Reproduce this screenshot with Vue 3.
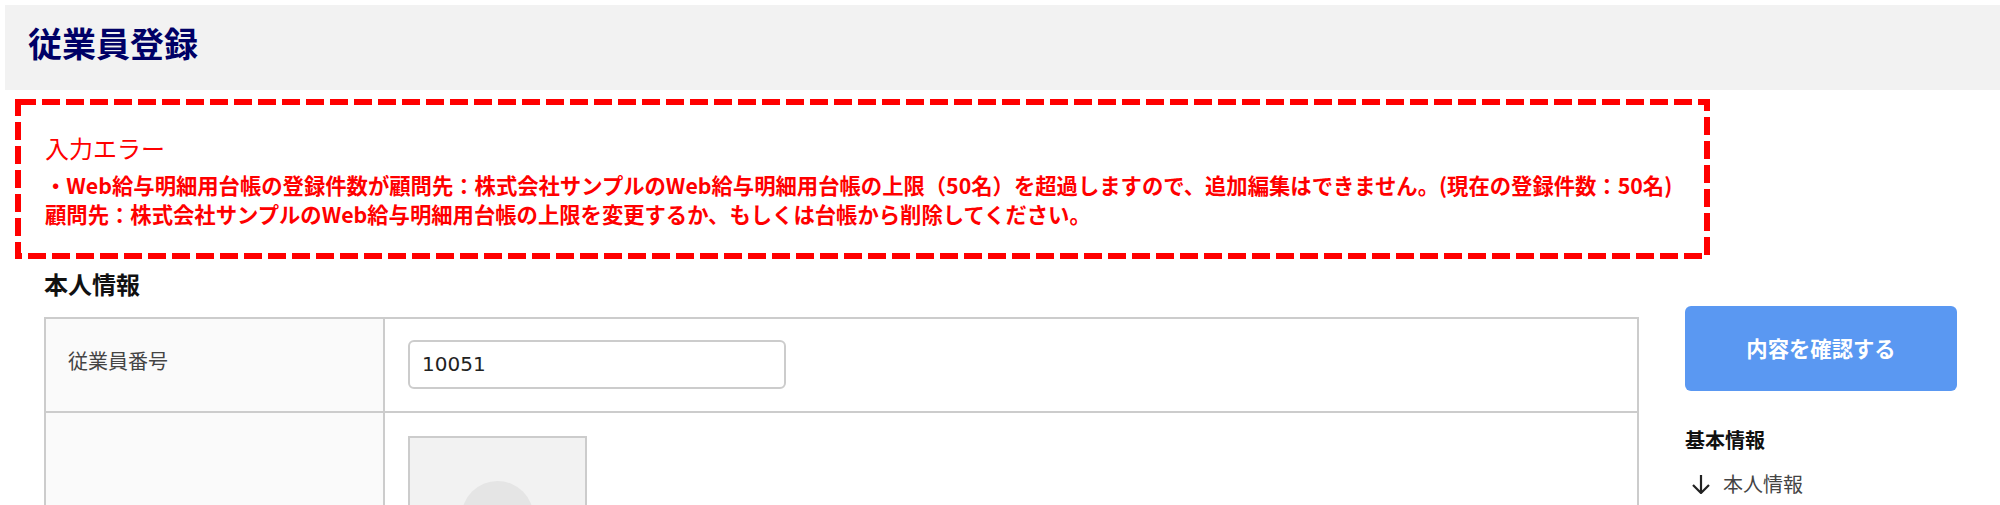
<template>
  <div class="page">
    <header class="head">
      <h1>従業員登録</h1>
    </header>

    <div class="error-box">
      <p class="error-title">入力エラー</p>
      <p class="error-text">・Web給与明細用台帳の登録件数が顧問先：株式会社サンプルのWeb給与明細用台帳の上限（50名）を超過しますので、追加編集はできません。(現在の登録件数：50名)</p>
      <p class="error-text">顧問先：株式会社サンプルのWeb給与明細用台帳の上限を変更するか、もしくは台帳から削除してください。</p>
    </div>

    <div class="body">
      <main class="main">
        <h2>本人情報</h2>
        <table class="form">
          <tbody>
            <tr class="row-num">
              <th>従業員番号</th>
              <td><input class="num" type="text" v-model="empNo"></td>
            </tr>
            <tr>
              <th></th>
              <td>
                <div class="photo">
                  <svg viewBox="0 0 175 175" width="175" height="175">
                    <circle cx="87.5" cy="79" r="36" fill="#e5e5e5" />
                  </svg>
                </div>
              </td>
            </tr>
          </tbody>
        </table>
      </main>

      <aside class="side">
        <button class="confirm">内容を確認する</button>
        <h3>基本情報</h3>
        <a class="link">
          <svg viewBox="0 0 20 20" width="20" height="20">
            <path d="M10 1v18M2 11l8 8 8-8" fill="none" stroke="#222" stroke-width="2.2" />
          </svg>
          本人情報
        </a>
      </aside>
    </div>
  </div>
</template>

<script setup>
import { ref } from 'vue'

const empNo = ref('10051')
</script>

<style>
html, body {
  margin: 0;
  background: #fff;
}
</style>

<style scoped>
.page {
  height: 505px;
  overflow: hidden;
  padding-top: 5px;
  box-sizing: border-box;
  font-family: "Liberation Sans", "Noto Sans CJK JP", sans-serif;
  color: #222;
}

.head {
  margin-left: 5px;
  height: 85px;
  background: #f2f2f2;
  display: flex;
  align-items: center;
  padding: 0 0 10px 23px;
  box-sizing: border-box;
}

.head h1 {
  margin: 0;
  font-size: 34px;
  font-weight: 700;
  color: #000066;
}

/* dashes are 18 on / 6 off, a css dashed border can't get that long */
.error-box {
  margin: 9px 0 0 15px;
  width: 1695px;
  height: 160px;
  box-sizing: border-box;
  padding: 34px 30px 0;
  color: #ff0000;
  background:
    repeating-linear-gradient(90deg, transparent 0 3px, #f00 3px 21px, transparent 21px 24px) left top / 100% 6px no-repeat,
    repeating-linear-gradient(90deg, #f00 0 7px, transparent 7px 13px, #f00 13px 24px) left bottom / calc(100% - 6px) 6px no-repeat,
    repeating-linear-gradient(180deg, #f00 0 17px, transparent 17px 23px, #f00 23px 24px) left top / 6px 100% no-repeat,
    repeating-linear-gradient(180deg, #f00 0 12px, transparent 12px 18px, #f00 18px 24px) right top / 6px calc(100% - 4px) no-repeat;
}

.error-title {
  margin: 0 0 3px;
  font-size: 24px;
  line-height: 34px;
}

.error-text {
  margin: 0;
  font-family: "Noto Sans CJK JP", sans-serif;
  font-size: 21.33px;
  font-weight: 700;
  line-height: 29px;
}

.body {
  display: flex;
}

.main {
  width: 1595px;
  margin-left: 44px;
}

.main h2 {
  margin: 12px 0 0;
  font-size: 24px;
  line-height: 30px;
  color: #111;
}

.form {
  margin-top: 16px;
  width: 100%;
  border-collapse: collapse;
  table-layout: fixed;
}

.form th,
.form td {
  border: 2px solid #ccc;
}

.form th {
  width: 293px;
  background: #fafafa;
  font-size: 20px;
  font-weight: 400;
  text-align: left;
  padding: 0 22px 9px;
  color: #444;
}

.form td {
  padding: 23px 23px 22px;
}

.form .row-num td {
  padding: 21px 23px 22px;
}

.num {
  display: block;
  width: 378px;
  height: 49px;
  box-sizing: border-box;
  border: 2px solid #ccc;
  border-radius: 6px;
  padding: 0 12px 2px;
  font-size: 20px;
  font-family: "DejaVu Sans", sans-serif;
  color: #222;
}

.photo {
  width: 179px;
  height: 179px;
  box-sizing: border-box;
  border: 2px solid #ccc;
  background: #f2f2f2;
}

.photo svg {
  display: block;
}

.side {
  margin-left: 46px;
  width: 272px;
  margin-top: 47px;
}

.confirm {
  display: block;
  width: 272px;
  height: 85px;
  border: none;
  border-radius: 6px;
  background: #5a98f2;
  color: #fff;
  font-size: 21.33px;
  font-weight: 700;
  font-family: inherit;
  padding: 0 0 3px;
}

.side h3 {
  margin: 36px 0 0;
  font-size: 20px;
  line-height: 28px;
  color: #111;
}

.link {
  display: flex;
  align-items: center;
  gap: 12px;
  margin-top: 14px;
  padding-left: 6px;
  font-size: 20px;
  color: #444;
}
</style>
